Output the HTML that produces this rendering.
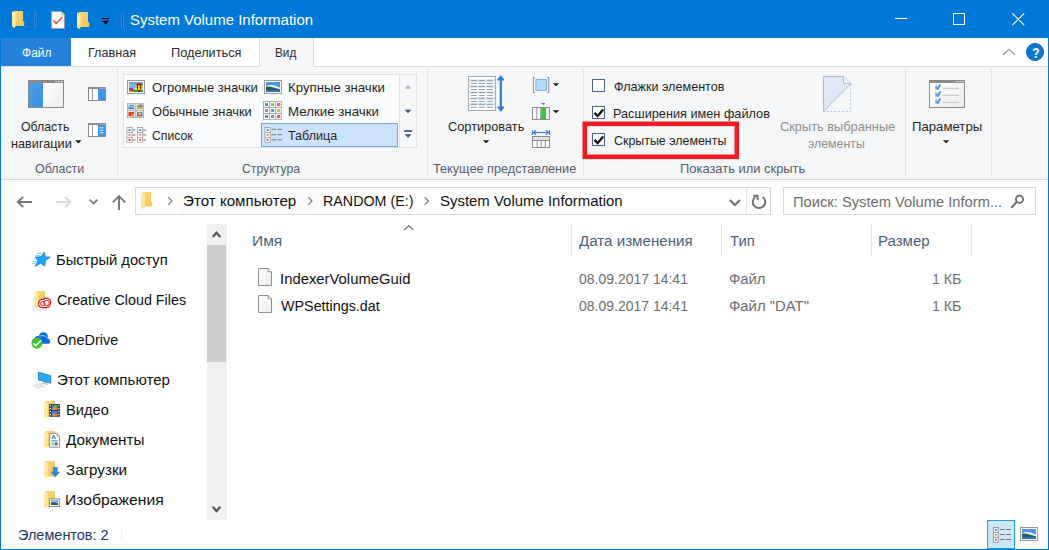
<!DOCTYPE html>
<html lang="ru">
<head>
<meta charset="utf-8">
<title>System Volume Information</title>
<style>
html,body{margin:0;padding:0;}
body{width:1049px;height:550px;overflow:hidden;background:#fff;font-family:"Liberation Sans",sans-serif;position:relative;}
#win{position:absolute;left:0;top:0;width:1049px;height:550px;background:#fff;overflow:hidden;}
.abs,.t,svg.i{position:absolute;}
.t{white-space:nowrap;line-height:1;transform-origin:0 0;font-family:"Liberation Sans",sans-serif;}
svg.i{overflow:visible;}
/* frame */
#titlebar{left:0;top:0;width:1049px;height:38px;background:#0078d7;}
#bl{left:0;top:38px;width:1px;height:512px;background:#0078d7;}
#br{left:1048px;top:38px;width:1px;height:512px;background:#0078d7;}
#bb{left:0;top:549px;width:1049px;height:1px;background:#0078d7;}
/* tabs */
#filetab{left:1px;top:38px;width:70px;height:28px;background:#2482da;}
#tabline{left:1px;top:66px;width:1047px;height:1px;background:#dadbdc;}
#vidtab{left:259px;top:38px;width:55px;height:29px;background:#f5f6f7;border-left:1px solid #d9dadb;border-right:1px solid #d9dadb;box-sizing:border-box;}
/* ribbon */
#ribbon{left:1px;top:67px;width:1047px;height:113px;background:#f5f6f7;}
#ribline{left:1px;top:179px;width:1047px;height:1px;background:#dadbdc;}
.vsep{width:1px;top:69px;height:107px;background:#e1e2e3;}
#gallery{left:123px;top:74px;width:294px;height:74px;box-sizing:border-box;border:1px solid #e1e2e3;background:#fbfcfd;}
#galscroll{left:399px;top:74px;width:18px;height:74px;box-sizing:border-box;border:1px solid #e1e2e3;background:#f5f6f7;}
#galsel{left:261px;top:123px;width:137px;height:24px;box-sizing:border-box;border:1px solid #6aa9e8;background:#cde3fb;}
.cb{width:13px;height:13px;box-sizing:border-box;border:1px solid #4d608b;background:#fff;}
#redbox{left:582.5px;top:121.5px;width:156.5px;height:37.5px;box-sizing:border-box;border:4.5px solid #ed1c24;}
/* address row */
#addr{left:135px;top:187px;width:636px;height:28px;box-sizing:border-box;border:1px solid #d9d9d9;background:#fff;}
#addrsep{left:746px;top:188px;width:1px;height:26px;background:#e5e5e5;}
#search{left:783px;top:187px;width:253px;height:28px;box-sizing:border-box;border:1px solid #d9d9d9;background:#fff;}
/* columns */
.csep{width:1px;top:224px;height:32px;background:#e5e5e5;}
/* nav scroll */
#sbtrack{left:207px;top:224px;width:20px;height:296px;background:#f0f0f0;}
#sbthumb{left:207px;top:245px;width:19px;height:117px;background:#cdcdcd;}
#navsep{left:229px;top:224px;width:1px;height:296px;background:#f6f6f6;}
/* status */
#stsep{left:121px;top:528px;width:1px;height:13px;background:#f0f0f0;}
#vbtn{left:987px;top:520px;width:28px;height:29px;box-sizing:border-box;border:1px solid #26a0da;background:#cce8f7;}
</style>
</head>
<body>
<div id="win">
<div class="abs" id="titlebar"></div>
<div class="abs" id="filetab"></div>
<div class="abs" id="ribbon"></div>
<div class="abs" id="tabline"></div>
<div class="abs" id="vidtab"></div>
<div class="abs" id="ribline"></div>
<div class="abs vsep" style="left:117px"></div>
<div class="abs vsep" style="left:427px"></div>
<div class="abs vsep" style="left:583px"></div>
<div class="abs vsep" style="left:905px"></div>
<div class="abs vsep" style="left:991px"></div>
<div class="abs" id="gallery"></div>
<div class="abs" id="galscroll"></div>
<div class="abs" id="galsel"></div>
<div class="abs cb" style="left:592px;top:79px"></div>
<div class="abs cb" style="left:592px;top:106px"></div>
<div class="abs cb" style="left:592px;top:133px"></div>
<svg class="i" style="left:575px;top:115px" width="175" height="50" viewBox="575 115 175 50"><rect x="584.8" y="123.8" width="152" height="33" fill="none" stroke="#ed1c24" stroke-width="4.6"/></svg>
<div class="abs" id="addr"></div>
<div class="abs" id="bchl" style="left:179px;top:189px;width:140px;height:25px;background:#fbfbfb"></div>
<div class="abs" id="addrsep"></div>
<div class="abs" id="search"></div>
<div class="abs csep" style="left:571px"></div>
<div class="abs csep" style="left:721px"></div>
<div class="abs csep" style="left:871px"></div>
<div class="abs csep" style="left:971px"></div>
<div class="abs" id="sbtrack"></div>
<div class="abs" id="sbthumb"></div>
<div class="abs" id="navsep"></div>
<div class="abs" id="stsep"></div>
<div class="abs" id="vbtn"></div>
<!-- ===== title bar icons ===== -->
<svg class="i" style="left:0;top:0" width="1049" height="68" viewBox="0 0 1049 68">
 <defs>
  <linearGradient id="fb" x1="0" y1="0" x2="1" y2="1"><stop offset="0" stop-color="#f7d77e"/><stop offset="1" stop-color="#eec556"/></linearGradient>
  <linearGradient id="ff" x1="0" y1="0" x2="0" y2="1"><stop offset="0" stop-color="#fff0b8"/><stop offset="1" stop-color="#ffe28c"/></linearGradient>
 </defs>
 <!-- folder 1 -->
 <path d="M13.5 11 H23 V21 H24.2 V26 H15 Z" fill="url(#fb)"/>
 <path d="M12 11.2 L15.6 13.4 V26.2 L14.6 28 L12 26.4 Z" fill="url(#ff)"/>
 <!-- separator -->
 <rect x="33.9" y="11.6" width="2.6" height="17.3" rx="1.3" fill="#3d8fdc"/><rect x="34.7" y="12.4" width="1" height="15.7" fill="#1a5aa6"/>
 <!-- doc with check -->
 <path d="M51.6 11.6 H61.5 L64.4 14.5 V28.4 H51.6 Z" fill="#fdfdfd" stroke="#a9a29c" stroke-width="0.9"/>
 <path d="M61.3 11.8 V14.7 H64.2" fill="#e9e9e9" stroke="#a9a29c" stroke-width="0.7"/>
 <path d="M53.4 20.6 L56.3 23.4 L62.4 17" fill="none" stroke="#f4511e" stroke-width="1.5"/>
 <!-- folder 2 -->
 <path d="M78.5 12 H88 V22 H89.2 V27 H80 Z" fill="url(#fb)"/>
 <path d="M77 12.2 L80.6 14.4 V27.2 L79.6 29 L77 27.4 Z" fill="url(#ff)"/>
 <!-- qat dropdown -->
 <rect x="101.8" y="18" width="7.6" height="1.1" fill="#000"/>
 <path d="M102.3 20.8 H109 L105.65 24.5 Z" fill="#000"/>
 <rect x="121.2" y="11.6" width="2.6" height="17.3" rx="1.3" fill="#3d8fdc"/><rect x="122" y="12.4" width="1" height="15.7" fill="#1a5aa6"/>
 <!-- window controls -->
 <rect x="895" y="18" width="12" height="1" fill="#fff"/>
 <rect x="953.5" y="13.5" width="11" height="11" fill="none" stroke="#fff" stroke-width="1"/>
 <path d="M1012.3 13.3 L1024.2 25.2 M1024.2 13.3 L1012.3 25.2" stroke="#fff" stroke-width="1.1" fill="none"/>
 <!-- ribbon collapse chevron -->
 <path d="M1003 55 L1009 49.2 L1015 55" fill="none" stroke="#8c8c8c" stroke-width="1.1"/>
 <!-- help -->
 <circle cx="1035" cy="52" r="8.5" fill="#0c78d6" stroke="#0a5cab" stroke-width="1"/>
 <text transform="translate(1035.8 57.7) scale(0.8 1)" text-anchor="middle" font-family="Liberation Sans" font-weight="bold" font-size="14.8" fill="#fff">?</text>
</svg>
<!-- ===== address row arrows ===== -->
<svg class="i" style="left:0;top:185px" width="1049" height="35" viewBox="0 185 1049 35">
 <!-- back -->
 <path d="M32 202 H18 M23.2 196.9 L17.8 202 L23.2 207.1" fill="none" stroke="#747474" stroke-width="1.9"/>
 <!-- forward (disabled) -->
 <path d="M56 202 H70.2 M65 196.9 L70.4 202 L65 207.1" fill="none" stroke="#d9d9d9" stroke-width="1.9"/>
 <!-- recent chevron -->
 <path d="M89.6 199.6 L93.5 203.5 L97.4 199.6" fill="none" stroke="#747474" stroke-width="1.6"/>
 <!-- up -->
 <path d="M119 210 V196 M112.8 202.4 L119 196.2 L125.2 202.4" fill="none" stroke="#747474" stroke-width="1.9"/>
 <!-- folder in address -->
 <path d="M142.5 192 H151 V201.5 H152.2 V206.5 H144 Z" fill="url(#fb)"/>
 <path d="M141 192.2 L144.6 194.4 V207.2 L143.6 209 L141 207.4 Z" fill="url(#ff)"/>
 <!-- breadcrumb chevrons -->
 <path d="M168.2 197.2 L172 201 L168.2 204.8" fill="none" stroke="#777" stroke-width="1.2"/>
 <path d="M308.2 197.2 L312 201 L308.2 204.8" fill="none" stroke="#777" stroke-width="1.2"/>
 <path d="M424.7 197.2 L428.5 201 L424.7 204.8" fill="none" stroke="#777" stroke-width="1.2"/>
 <!-- address dropdown -->
 <path d="M729.9 200 L734.9 205 L739.9 200" fill="none" stroke="#707070" stroke-width="2"/>
 <!-- refresh -->
 <path d="M762.82 197.01 A6.2 6.2 0 1 1 755.18 197.01" fill="none" stroke="#707070" stroke-width="2"/>
 <path d="M753.2 195.8 H757.6 V200" fill="none" stroke="#707070" stroke-width="2"/>
 <!-- magnifier -->
 <circle cx="1019.5" cy="199.3" r="3.6" fill="none" stroke="#6e6e6e" stroke-width="1.8"/>
 <path d="M1016.7 202 L1011.2 207.8" stroke="#6e6e6e" stroke-width="2" fill="none"/>
</svg>
<!-- ===== ribbon: panes group + layout gallery ===== -->
<svg class="i" style="left:0;top:68px" width="430" height="110" viewBox="0 68 430 110">
 <defs>
  <linearGradient id="bluep" x1="0" y1="0" x2="1" y2="1"><stop offset="0" stop-color="#4a9de8"/><stop offset="1" stop-color="#3a8fdd"/></linearGradient>
  <linearGradient id="whitep" x1="0" y1="0" x2="1" y2="1"><stop offset="0" stop-color="#ffffff"/><stop offset="1" stop-color="#ececec"/></linearGradient>
 </defs>
 <!-- big nav pane icon 28..64 x 80..108 -->
 <rect x="28" y="80" width="36" height="28" fill="#8a8a8a"/>
 <rect x="29" y="83" width="14" height="24" fill="url(#bluep)"/>
 <rect x="43" y="83" width="20" height="24" fill="url(#whitep)"/>
 <rect x="55" y="81" width="2" height="1" fill="#dcdcdc"/><rect x="58" y="81" width="2" height="1" fill="#dcdcdc"/><rect x="61" y="81" width="2" height="1" fill="#dcdcdc"/>
 <!-- small preview pane icon 88..106 x 87..101 -->
 <rect x="88" y="87" width="18" height="14" fill="#8a8a8a"/>
 <rect x="89" y="89" width="16" height="11" fill="#fff"/>
 <rect x="92" y="89" width="1" height="11" fill="#9b9b9b"/>
 <rect x="98" y="89" width="7" height="11" fill="#3f95e3"/>
 <rect x="100" y="87.8" width="1.2" height="0.8" fill="#dcdcdc"/><rect x="102" y="87.8" width="1.2" height="0.8" fill="#dcdcdc"/><rect x="104" y="87.8" width="1.2" height="0.8" fill="#dcdcdc"/>
 <!-- small details pane icon 88..106 x 123..137 -->
 <rect x="88" y="123" width="18" height="14" fill="#8a8a8a"/>
 <rect x="89" y="125" width="16" height="11" fill="#fff"/>
 <rect x="92" y="125" width="1" height="11" fill="#9b9b9b"/>
 <rect x="98" y="125" width="7" height="11" fill="#3f95e3"/>
 <rect x="99.5" y="127.3" width="4" height="1" fill="#e8f2fc"/><rect x="99.5" y="129.8" width="4" height="1" fill="#e8f2fc"/><rect x="99.5" y="132.3" width="4" height="1" fill="#e8f2fc"/>
 <rect x="100" y="123.8" width="1.2" height="0.8" fill="#dcdcdc"/><rect x="102" y="123.8" width="1.2" height="0.8" fill="#dcdcdc"/><rect x="104" y="123.8" width="1.2" height="0.8" fill="#dcdcdc"/>
 <!-- nav pane dropdown arrow -->
 <path d="M75.2 140.2 H81.6 L78.4 143.4 Z" fill="#1a1a1a"/>

 <!-- gallery: extra large icons 127..145 x 80..94 -->
 <rect x="127" y="80" width="18" height="14" fill="#999"/>
 <rect x="128" y="81" width="16" height="12" fill="#fff"/>
 <defs><linearGradient id="sky" x1="0" y1="0" x2="0" y2="1"><stop offset="0" stop-color="#5a9ff0"/><stop offset="1" stop-color="#a4cff8"/></linearGradient></defs>
 <rect x="129" y="82" width="14" height="10" fill="url(#sky)"/>
 <path d="M129 84.6 C130 83.8 131.2 84.2 131.8 85.4" fill="none" stroke="#f2d23a" stroke-width="0.9"/>
 <path d="M129 88.2 L130 87.4 L131 89 L132.2 87.6 L133.6 89.4 L134 92 H129 Z" fill="#7a2fb0"/>
 <path d="M129 89.6 L130.2 89 L131.2 90.4 L132.4 89.4 L133.8 90.6 L134 92 H129 Z" fill="#e8322a"/>
 <path d="M129 91 L130.6 90.6 L131.6 91.4 L133 91 L133.6 92 H129 Z" fill="#f59a1e"/>
 <rect x="133.9" y="90" width="9.1" height="2" fill="#18a32e"/>
 <circle cx="139.1" cy="86.9" r="3.9" fill="#f4e020"/>
 <path d="M135.6 85.2 A3.9 3.9 0 0 1 142.6 85.2 Z" fill="#c23a1a"/>
 <rect x="135.3" y="86.6" width="7.6" height="0.9" fill="#e8861e"/>
 <rect x="137.1" y="83.8" width="0.9" height="6" fill="#2a1408"/><rect x="140.2" y="83.8" width="0.9" height="6" fill="#2a1408"/>
 <path d="M137.4 90.2 H140.8 L140 91.6 H138.2 Z" fill="#120a06"/>
 <!-- gallery: medium icons 127..144 x 103..118 -->
 <g>
  <rect x="127" y="103" width="8.5" height="7.5" fill="#a6a6a6"/><rect x="127.8" y="103.8" width="6.9" height="5.9" fill="#fff"/>
  <rect x="128.5" y="104.6" width="5.5" height="4.2" fill="#5b9fe0"/><rect x="128.5" y="106.6" width="5.5" height="1" fill="#dfeaf5"/><rect x="128.5" y="107.6" width="5.5" height="1.2" fill="#2f6f5a"/>
  <rect x="135.5" y="103" width="8.5" height="7.5" fill="#a6a6a6"/><rect x="136.3" y="103.8" width="6.9" height="5.9" fill="#fff"/>
  <rect x="137" y="104.6" width="5.5" height="4.2" fill="#8fb84a"/><rect x="139.4" y="104.6" width="3.1" height="2.2" fill="#9a62c0"/><rect x="137" y="107.4" width="5.5" height="1.4" fill="#d9b13a"/>
  <rect x="127" y="110.5" width="8.5" height="7.5" fill="#a6a6a6"/><rect x="127.8" y="111.3" width="6.9" height="5.9" fill="#fff"/>
  <rect x="128.5" y="112.1" width="5.5" height="4.2" fill="#d8322a"/><rect x="131" y="113.6" width="3" height="2.7" fill="#f0932a"/>
  <rect x="135.5" y="110.5" width="8.5" height="7.5" fill="#a6a6a6"/><rect x="136.3" y="111.3" width="6.9" height="5.9" fill="#fff"/>
  <rect x="137" y="112.1" width="5.5" height="4.2" fill="#3f7fd8"/><rect x="138.6" y="112.8" width="2.6" height="2.6" fill="#f2c21a"/><rect x="137" y="115.3" width="5.5" height="1" fill="#d8322a"/>
 </g>
 <!-- gallery: list 126..146 x 127..143 -->
 <g id="listcol">
  <rect x="126.5" y="127" width="6" height="15.6" fill="#9a9a9a"/>
  <rect x="127.3" y="127.8" width="4.4" height="4.2" fill="#fff"/><rect x="127.3" y="132.8" width="4.4" height="4.2" fill="#fff"/><rect x="127.3" y="137.8" width="4.4" height="4.2" fill="#fff"/>
  <rect x="128.6" y="129.2" width="1.9" height="1.7" fill="#2f78c8"/>
  <rect x="128.6" y="134.1" width="1.9" height="1.7" fill="#c8922a"/>
  <rect x="128.6" y="139" width="1.9" height="1.7" fill="#d8322a"/>
  <rect x="132.5" y="129.5" width="3" height="1" fill="#777"/><rect x="132.5" y="134.5" width="3" height="1" fill="#777"/><rect x="132.5" y="139.5" width="3" height="1" fill="#777"/>
 </g>
 <use href="#listcol" x="10.6" y="0"/>

 <!-- gallery: large icons 264..282 x 80..94 -->
 <rect x="264" y="80" width="18" height="14" fill="#999"/>
 <rect x="265" y="81" width="16" height="12" fill="#fff"/>
 <rect x="266" y="82" width="14" height="10" fill="#4f97de"/>
 <path d="M266 86.2 C269 84.2 273 84.6 280 87.4 V89 H266 Z" fill="#e6f0f8"/>
 <path d="M266 86.8 C270 86 274 88 280 89.4 V90.4 H266 Z" fill="#2e5f4c"/>
 <rect x="266" y="90.2" width="14" height="1.8" fill="#2f6fc8"/>
 <!-- gallery: small icons 263..282 x 101..120 -->
 <g>
  <rect x="263" y="101" width="19" height="18.8" fill="#a6a6a6"/>
  <g fill="#fff">
   <rect x="263.9" y="101.9" width="5.2" height="5" /><rect x="270" y="101.9" width="5.2" height="5"/><rect x="276.1" y="101.9" width="5.2" height="5"/>
   <rect x="263.9" y="107.9" width="5.2" height="5" /><rect x="270" y="107.9" width="5.2" height="5"/><rect x="276.1" y="107.9" width="5.2" height="5"/>
   <rect x="263.9" y="113.9" width="5.2" height="5" /><rect x="270" y="113.9" width="5.2" height="5"/><rect x="276.1" y="113.9" width="5.2" height="5"/>
  </g>
  <rect x="265" y="103.2" width="3" height="2.6" fill="#3f86d0"/><rect x="271.1" y="103.2" width="3" height="2.6" fill="#8fb84a"/><rect x="277.2" y="103.2" width="3" height="2.6" fill="#d02a1e"/>
  <rect x="265" y="109.2" width="3" height="2.6" fill="#4a86c8"/><rect x="271.1" y="109.2" width="3" height="2.6" fill="#3f86d0"/><rect x="277.2" y="109.2" width="3" height="2.6" fill="#a8b84a"/>
  <rect x="265" y="115.2" width="3" height="2.6" fill="#3f86d0"/><rect x="271.1" y="115.2" width="3" height="2.6" fill="#4a78c8"/><rect x="277.2" y="115.2" width="3" height="2.6" fill="#d02a1e"/>
  <rect x="266.2" y="110" width="1.6" height="1.4" fill="#e0a02a"/><rect x="272.6" y="116" width="1.6" height="1.4" fill="#e0a02a"/><rect x="278.6" y="104" width="1.4" height="1.4" fill="#f0a02a"/><rect x="278.6" y="116" width="1.4" height="1.4" fill="#f0a02a"/>
 </g>
 <!-- gallery: details 264.5..282 x 127..142.5 -->
 <g>
  <rect x="264.5" y="127.2" width="6" height="15.4" fill="#9a9a9a"/>
  <rect x="265.3" y="128" width="4.4" height="4.1" fill="#fff"/><rect x="265.3" y="132.9" width="4.4" height="4.1" fill="#fff"/><rect x="265.3" y="137.8" width="4.4" height="4.1" fill="#fff"/>
  <rect x="266.6" y="129.3" width="1.9" height="1.7" fill="#2f78c8"/>
  <rect x="266.6" y="134.2" width="1.9" height="1.7" fill="#c8922a"/>
  <rect x="266.6" y="139" width="1.9" height="1.7" fill="#d8322a"/>
  <g fill="#777">
   <rect x="271.6" y="128.8" width="4.6" height="1"/><rect x="277.4" y="128.8" width="4.8" height="1"/>
   <rect x="271.6" y="134.2" width="4.6" height="1"/><rect x="277.4" y="134.2" width="4.8" height="1"/>
   <rect x="271.6" y="139.3" width="4.6" height="1"/><rect x="277.4" y="139.3" width="4.8" height="1"/>
  </g>
 </g>
 <!-- gallery scroll arrows -->
 <path d="M404.8 88.8 H411.2 L408 84.9 Z" fill="#adb5c1"/>
 <path d="M404.8 109.8 H411.2 L408 113.3 Z" fill="#3f526f"/>
 <rect x="404.1" y="130.2" width="8" height="1.7" fill="#3f526f"/>
 <path d="M404.7 134.3 H411.5 L408.1 138.1 Z" fill="#3f526f"/>
</svg>
<!-- ===== ribbon: current view, show/hide, options ===== -->
<svg class="i" style="left:430px;top:68px" width="618" height="110" viewBox="430 68 618 110">
 <!-- sort-by table 468..496 x 76..111 -->
 <rect x="468.5" y="76.5" width="27" height="34" fill="#fff" stroke="#a8a8a8" stroke-width="1"/>
 <g fill="#d6e9f7">
  <rect x="469" y="79.2" width="26" height="2.9"/><rect x="469" y="85.1" width="26" height="2.9"/><rect x="469" y="91" width="26" height="2.9"/><rect x="469" y="97" width="26" height="2.9"/><rect x="469" y="102.9" width="26" height="2.9"/>
 </g>
 <g fill="#9a9a9a">
  <g id="srow"><rect x="470.8" y="80.1" width="5.9" height="1"/><rect x="478.8" y="80.1" width="5.9" height="1"/><rect x="486.9" y="80.1" width="5.9" height="1"/></g>
  <use href="#srow" y="2.97"/><use href="#srow" y="5.94"/><use href="#srow" y="8.91"/><use href="#srow" y="11.88"/><use href="#srow" y="14.85"/><use href="#srow" y="17.82"/><use href="#srow" y="20.79"/><use href="#srow" y="23.76"/><use href="#srow" y="26.73"/>
 </g>
 <!-- sort arrow -->
 <path d="M500.8 77.5 V109.5" stroke="#2b7cd3" stroke-width="2.2" fill="none"/>
 <path d="M497.9 80.4 L500.8 76.8 L503.7 80.4 M497.9 106.6 L500.8 110.2 L503.7 106.6" stroke="#2b7cd3" stroke-width="2" fill="none"/>
 <!-- sort dropdown -->
 <path d="M482.9 140.2 H489.4 L486.15 143.2 Z" fill="#1a1a1a"/>
 <!-- group by icon 533..549 x 77..93 -->
 <path d="M535 77.5 H533.4 V92.5 H535 M547.2 77.5 H548.8 V92.5 H547.2" fill="none" stroke="#8c8c8c" stroke-width="1"/>
 <rect x="535.9" y="79.5" width="10.6" height="10.8" fill="#b8dbfb" stroke="#72b4f0" stroke-width="1"/>
 <path d="M552.8 83.2 H559.2 L556 86.2 Z" fill="#1a1a1a"/>
 <!-- add columns icon 532..550 x 107..120 -->
 <rect x="532.5" y="107.5" width="17" height="12" fill="#fff" stroke="#8c8c8c" stroke-width="1"/>
 <rect x="536.4" y="108" width="1" height="11" fill="#8c8c8c"/><rect x="540.2" y="108" width="1" height="11" fill="#8c8c8c"/><rect x="545" y="108" width="1" height="11" fill="#8c8c8c"/>
 <rect x="541.2" y="108" width="3.8" height="11" fill="#2fcb2f"/>
 <path d="M541.2 102.9 H545.4 L543.3 105 Z" fill="#2b7cd3"/>
 <path d="M552.8 110.3 H559.2 L556 113.3 Z" fill="#1a1a1a"/>
 <!-- size all columns icon 532..550 x 130..148 -->
 <path d="M532.5 130.2 V135 M549.5 130.2 V135 M533.5 132.5 H548.5 M536 130.2 L533.7 132.5 L536 134.8 M546 130.2 L548.3 132.5 L546 134.8" fill="none" stroke="#2b7cd3" stroke-width="1.2"/>
 <rect x="532.5" y="136.5" width="17" height="11" fill="#fff" stroke="#8c8c8c" stroke-width="1"/>
 <rect x="533" y="137" width="16" height="3" fill="#e2e2e2"/>
 <rect x="533" y="140" width="16" height="1" fill="#8c8c8c"/>
 <rect x="536.6" y="140.5" width="1" height="6.5" fill="#8c8c8c"/><rect x="540.7" y="140.5" width="1" height="6.5" fill="#8c8c8c"/><rect x="544.8" y="140.5" width="1" height="6.5" fill="#8c8c8c"/>
 <!-- check marks in checkboxes 2 and 3 -->
 <path d="M594.4 112.8 L597.7 116 L603.2 109.6" fill="none" stroke="#111" stroke-width="2.3"/>
 <path d="M594.4 139.8 L597.7 143 L603.2 136.6" fill="none" stroke="#111" stroke-width="2.3"/>
 <!-- hide selected items icon 823..851 x 76..112 -->
 <path d="M823.5 76.5 H843.5 L850.8 83.6 L823.5 111.3 Z" fill="#e1e9f9" stroke="#aab9dd" stroke-width="1"/>
 <path d="M843.5 76.5 V83.6 H850.8" fill="#edf2fb" stroke="#aab9dd" stroke-width="1"/>
 <path d="M850.7 84 V111.5 H823.5" fill="none" stroke="#b3c0df" stroke-width="1" stroke-dasharray="2.2 1.6"/>
 <!-- options icon 929..965 x 80..108 -->
 <rect x="929" y="80" width="36" height="28" fill="#8a8a8a"/>
 <rect x="930" y="83" width="34" height="24" fill="url(#whitep)"/>
 <rect x="956" y="81" width="2" height="1" fill="#dcdcdc"/><rect x="959" y="81" width="2" height="1" fill="#dcdcdc"/><rect x="962" y="81" width="2" height="1" fill="#dcdcdc"/>
 <g id="orow">
  <rect x="935.6" y="85.8" width="4" height="3.8" fill="#f4f4f4" stroke="#c4c4c4" stroke-width="0.8"/>
  <path d="M935.8 86.8 L937.6 88.8 L940.6 84.4" fill="none" stroke="#2b8ee8" stroke-width="1.5"/>
  <rect x="942.8" y="87.8" width="16.2" height="1" fill="#c4c4c4"/>
 </g>
 <use href="#orow" y="7"/><use href="#orow" y="14"/>
 <path d="M942.8 140.2 H949.3 L946.05 143.2 Z" fill="#1a1a1a"/>
</svg>
<!-- ===== main area icons ===== -->
<svg class="i" style="left:0;top:222px" width="1049" height="328" viewBox="0 222 1049 328">
 <defs>
  <g id="fold16"><!-- small folder, origin top-left at (0,0), 11 x 17 -->
   <path d="M1.4 0 H10.9 V15.6 H2.6 Z" fill="url(#fb)"/>
   <path d="M0 0.3 L3.6 2.6 V15.3 L2.7 17 L0 15.4 Z" fill="url(#ff)"/>
  </g>
  <linearGradient id="pg" x1="0" y1="0" x2="1" y2="1"><stop offset="0" stop-color="#ffffff"/><stop offset="1" stop-color="#ececec"/></linearGradient>
  <g id="fileico"><!-- 14 x 18 page at (0,0) -->
   <path d="M0.5 0.5 H10.2 L13.5 3.8 V17.5 H0.5 Z" fill="url(#pg)" stroke="#8e8e8e" stroke-width="1"/>
   <path d="M10.2 0.5 V3.8 H13.5" fill="#fff" stroke="#8e8e8e" stroke-width="1"/>
  </g>
 </defs>
 <!-- quick access star -->
 <g stroke="#86c8f8" stroke-width="1" fill="none" stroke-linecap="round">
  <path d="M37 253.4 H41.8"/><path d="M36 255.6 H40"/><path d="M33 261.4 H36.2"/><path d="M32.2 263.4 H34.8"/>
 </g>
 <path d="M44.4 252 L45.2 257 L50.2 257.2 L45.6 260.4 L44.7 266 L40.6 263.2 L35.2 266.3 L38 260.6 L35 257.2 L41.1 256.8 Z" fill="#22a0f4" stroke="#1687de" stroke-width="0.9" stroke-linejoin="round"/>
 <!-- creative cloud folder -->
 <use href="#fold16" x="34.2" y="291"/>
 <path d="M38.6 303.4 C38.6 300.6 40.8 298.9 43.2 299.3 C44.2 298.2 45.6 297.9 47 298.2 C49.4 298.7 50.8 300.8 50.5 303.2 C50.3 305.9 48.4 307.6 45.8 307.6 H42.6 C40.2 307.6 38.6 305.7 38.6 303.4 Z" fill="#fff" stroke="#e8141c" stroke-width="1.2"/>
 <circle cx="42.7" cy="303.6" r="2.1" fill="#fff7d0" stroke="#e8141c" stroke-width="1"/>
 <circle cx="46.6" cy="303" r="2.7" fill="none" stroke="#e8141c" stroke-width="1"/>
 <!-- onedrive -->
 <path d="M34.2 340.6 C33.8 337.6 36.2 335.4 38.8 336 C39.6 333.2 42.4 331.6 45 332.5 C46.6 333.1 47.6 334.6 47.8 336.2 L47 341 H35 Z" fill="#0a6fdc"/>
 <path d="M38.4 338.2 C40 335.4 44.2 334.6 46.4 337.2" fill="none" stroke="#fff" stroke-width="0.8"/>
 <path d="M36 343.8 C33.2 343.8 32 341 33.6 339.2 C34.6 338.2 36.2 338.2 37.2 338.8 C38.4 335.6 43.6 335.2 45.4 338.6 C47.8 337.8 50 339.2 50.2 341.4 C50.3 342.8 49.3 343.8 48 343.8 Z" fill="#0a6fdc"/>
 <circle cx="37" cy="343.1" r="5.6" fill="#3fc42f"/>
 <path d="M33.4 343.4 L35.7 345.6 L41 340.5" fill="none" stroke="#fff" stroke-width="1.5"/>
 <!-- this pc -->
 <path d="M31.8 385.2 L41 382.8 L45.8 386.6 L37 389 Z" fill="#e2e4e6"/>
 <path d="M41.6 382.4 L47.8 383.8 L47.8 385 L41.6 383.6 Z" fill="#b8bcc0"/>
 <rect x="43.6" y="380.6" width="3" height="2.6" fill="#c4c8cc"/>
 <path d="M38.4 372.1 L50.8 375.7 V383.3 L38.4 379.9 Z" fill="#2aa7f6" stroke="#2a80c4" stroke-width="0.9" stroke-linejoin="round"/>
 <!-- videos -->
 <use href="#fold16" x="44.1" y="401"/>
 <rect x="49.2" y="404" width="10.8" height="12.8" fill="#3b3b3b"/>
 <g fill="#fff"><rect x="49.9" y="405" width="1.1" height="1.3"/><rect x="49.9" y="408" width="1.1" height="1.3"/><rect x="49.9" y="411" width="1.1" height="1.3"/><rect x="49.9" y="414" width="1.1" height="1.3"/>
 <rect x="58.2" y="405" width="1.1" height="1.3"/><rect x="58.2" y="408" width="1.1" height="1.3"/><rect x="58.2" y="411" width="1.1" height="1.3"/><rect x="58.2" y="414" width="1.1" height="1.3"/></g>
 <rect x="51.8" y="404.8" width="5.6" height="5.2" fill="#3f86d8"/><path d="M51.8 410 L54 406.6 L56 408.6 L57.4 407 V410 Z" fill="#e08a2a"/><rect x="54.6" y="405.2" width="2.4" height="2" fill="#7ab83a"/>
 <rect x="51.8" y="411" width="5.6" height="5.2" fill="#3f86d8"/><path d="M51.8 416.2 L54 412.8 L56 414.8 L57.4 413.2 V416.2 Z" fill="#e08a2a"/>
 <!-- documents -->
 <use href="#fold16" x="44.1" y="431"/>
 <path d="M49.6 433.4 H57 L59.6 436 V447.2 H49.6 Z" fill="#fff" stroke="#8e8e8e" stroke-width="1"/>
 <path d="M57 433.4 V436 H59.6" fill="#f2f2f2" stroke="#8e8e8e" stroke-width="0.8"/>
 <path d="M52 439 L53.8 435 L55.6 439 M52.6 437.8 H55" fill="none" stroke="#2f78d0" stroke-width="0.9"/>
 <rect x="51.4" y="440.4" width="6.4" height="1" fill="#2f78d0"/>
 <rect x="51.4" y="442.6" width="2.4" height="0.9" fill="#7a8a9a"/><rect x="51.4" y="444.4" width="2.4" height="0.9" fill="#7a8a9a"/>
 <rect x="54.6" y="442.4" width="3.2" height="3" fill="#3f8a5a"/>
 <!-- downloads -->
 <use href="#fold16" x="44.1" y="461"/>
 <path d="M52.9 467 H57.6 V471.8 H60.2 L55.25 477.2 L50.3 471.8 H52.9 Z" fill="#2e86de"/>
 <!-- pictures -->
 <use href="#fold16" x="44.1" y="491"/>
 <rect x="49.6" y="498.9" width="10" height="7.6" fill="#fff" stroke="#8a8a8a" stroke-width="1"/>
 <rect x="51" y="500.3" width="7.2" height="4.8" fill="#4f97de"/>
 <path d="M51 502.6 C53 501.6 55.5 502.2 58.2 503.6 V505.1 H51 Z" fill="#2e5f4c"/>
 <path d="M51 502.2 C53 501.2 55.5 501.6 58.2 503" fill="none" stroke="#e6f0f8" stroke-width="0.7"/>
 <!-- file icons -->
 <use href="#fileico" x="258" y="268"/>
 <use href="#fileico" x="258" y="295"/>
 <!-- nav scrollbar arrows -->
 <path d="M212.7 237 L216.5 232.7 L220.3 237" fill="none" stroke="#555" stroke-width="2.3"/>
 <path d="M212.7 506.8 L216.5 511.1 L220.3 506.8" fill="none" stroke="#555" stroke-width="2.3"/>
 <!-- column sort arrow -->
 <path d="M404.2 230.2 L408.8 225.6 L413.4 230.2" fill="none" stroke="#666" stroke-width="1.15"/>
 <!-- status bar: details view button icon -->
 <g>
  <rect x="993" y="527" width="5.6" height="15.6" fill="#8e8e8e"/>
  <rect x="993.9" y="527.9" width="3.8" height="4"  fill="#fff"/><rect x="993.9" y="532.8" width="3.8" height="4" fill="#fff"/><rect x="993.9" y="537.7" width="3.8" height="4" fill="#fff"/>
  <rect x="995" y="529.2" width="1.7" height="1.6" fill="#2f6fb8"/><rect x="995" y="534" width="1.7" height="1.6" fill="#c8922a"/><rect x="995" y="538.9" width="1.7" height="1.6" fill="#d8322a"/>
  <g fill="#777"><rect x="1000" y="529" width="4.6" height="1"/><rect x="1006" y="529" width="5" height="1"/>
  <rect x="1000" y="534" width="4.6" height="1"/><rect x="1006" y="534" width="5" height="1"/>
  <rect x="1000" y="539" width="4.6" height="1"/><rect x="1006" y="539" width="5" height="1"/></g>
 </g>
 <!-- status bar: large icons view -->
 <rect x="1020" y="527" width="18" height="14" fill="#999"/>
 <rect x="1021" y="528" width="16" height="12" fill="#fff"/>
 <rect x="1022" y="529" width="14" height="10" fill="#4f97de"/>
 <path d="M1022 533.2 C1025 531.2 1029 531.6 1036 534.4 V536 H1022 Z" fill="#e6f0f8"/>
 <path d="M1022 533.8 C1026 533 1030 535 1036 536.4 V537.4 H1022 Z" fill="#2e5f4c"/>
 <rect x="1022" y="537.2" width="14" height="1.8" fill="#2f6fc8"/>
</svg>

<span class="t" style="left:129.60px;top:11.73px;font-size:15.2px;transform:scaleX(0.9856);color:#ffffff">System Volume Information</span>
<span class="t" style="left:22.00px;top:46.00px;font-size:13px;transform:scaleX(0.9243);color:#ffffff">Файл</span>
<span class="t" style="left:87.53px;top:46.00px;font-size:13px;transform:scaleX(0.9703);color:#2a2a2a">Главная</span>
<span class="t" style="left:170.52px;top:46.00px;font-size:13px;transform:scaleX(0.9824);color:#2a2a2a">Поделиться</span>
<span class="t" style="left:275.49px;top:46.00px;font-size:13px;transform:scaleX(0.9070);color:#2a2a2a">Вид</span>
<span class="t" style="left:20.50px;top:120.00px;font-size:13px;transform:scaleX(0.9465);color:#1f1f1f">Область</span>
<span class="t" style="left:10.50px;top:137.00px;font-size:13px;transform:scaleX(0.9763);color:#1f1f1f">навигации</span>
<span class="t" style="left:34.50px;top:162.00px;font-size:13px;transform:scaleX(0.9562);color:#555b6b">Области</span>
<span class="t" style="left:152.00px;top:81.00px;font-size:13px;transform:scaleX(1.0032);color:#1f1f1f">Огромные значки</span>
<span class="t" style="left:152.00px;top:105.00px;font-size:13px;transform:scaleX(0.9892);color:#1f1f1f">Обычные значки</span>
<span class="t" style="left:152.00px;top:129.00px;font-size:13px;transform:scaleX(0.9411);color:#1f1f1f">Список</span>
<span class="t" style="left:288.18px;top:81.00px;font-size:13px;transform:scaleX(1.0159);color:#1f1f1f">Крупные значки</span>
<span class="t" style="left:288.18px;top:105.00px;font-size:13px;transform:scaleX(1.0217);color:#1f1f1f">Мелкие значки</span>
<span class="t" style="left:288.00px;top:129.00px;font-size:13px;transform:scaleX(0.9663);color:#1f1f1f">Таблица</span>
<span class="t" style="left:242.00px;top:162.00px;font-size:13px;transform:scaleX(0.9416);color:#555b6b">Структура</span>
<span class="t" style="left:447.50px;top:120.00px;font-size:13px;transform:scaleX(0.9821);color:#1f1f1f">Сортировать</span>
<span class="t" style="left:432.50px;top:162.00px;font-size:13px;transform:scaleX(0.9755);color:#555b6b">Текущее представление</span>
<span class="t" style="left:614.00px;top:80.00px;font-size:13px;transform:scaleX(0.9687);color:#1f1f1f">Флажки элементов</span>
<span class="t" style="left:613.02px;top:107.00px;font-size:13px;transform:scaleX(0.9776);color:#1f1f1f">Расширения имен файлов</span>
<span class="t" style="left:614.00px;top:134.00px;font-size:13px;transform:scaleX(0.9552);color:#1f1f1f">Скрытые элементы</span>
<span class="t" style="left:679.51px;top:162.00px;font-size:13px;transform:scaleX(0.9935);color:#555b6b">Показать или скрыть</span>
<span class="t" style="left:779.50px;top:120.00px;font-size:13px;transform:scaleX(0.9842);color:#8e8e8e">Скрыть выбранные</span>
<span class="t" style="left:808.00px;top:137.00px;font-size:13px;transform:scaleX(0.9502);color:#8e8e8e">элементы</span>
<span class="t" style="left:911.99px;top:120.00px;font-size:13px;transform:scaleX(1.0125);color:#1f1f1f">Параметры</span>
<span class="t" style="left:182.60px;top:193.13px;font-size:15.2px;transform:scaleX(0.9972);color:#111111">Этот компьютер</span>
<span class="t" style="left:322.56px;top:193.13px;font-size:15.2px;transform:scaleX(0.9409);color:#111111">RANDOM (E:)</span>
<span class="t" style="left:439.60px;top:193.13px;font-size:15.2px;transform:scaleX(0.9835);color:#111111">System Volume Information</span>
<span class="t" style="left:793.03px;top:194.13px;font-size:15.2px;transform:scaleX(0.9685);color:#6d6d6d">Поиск: System Volume Inform...</span>
<span class="t" style="left:252.48px;top:233.13px;font-size:15.2px;transform:scaleX(1.0227);color:#4c607a">Имя</span>
<span class="t" style="left:579.00px;top:233.13px;font-size:15.2px;transform:scaleX(0.9966);color:#4c607a">Дата изменения</span>
<span class="t" style="left:730.00px;top:233.13px;font-size:15.2px;transform:scaleX(0.9764);color:#4c607a">Тип</span>
<span class="t" style="left:878.21px;top:233.13px;font-size:15.2px;transform:scaleX(0.9891);color:#4c607a">Размер</span>
<span class="t" style="left:279.52px;top:271.13px;font-size:15.2px;transform:scaleX(0.9777);color:#111111">IndexerVolumeGuid</span>
<span class="t" style="left:280.50px;top:298.13px;font-size:15.2px;transform:scaleX(0.9435);color:#111111">WPSettings.dat</span>
<span class="t" style="left:579.00px;top:271.13px;font-size:15.2px;transform:scaleX(0.9211);color:#6d6d6d">08.09.2017 14:41</span>
<span class="t" style="left:579.00px;top:298.13px;font-size:15.2px;transform:scaleX(0.9211);color:#6d6d6d">08.09.2017 14:41</span>
<span class="t" style="left:728.80px;top:271.13px;font-size:15.2px;transform:scaleX(0.9760);color:#6d6d6d">Файл</span>
<span class="t" style="left:728.80px;top:298.13px;font-size:15.2px;transform:scaleX(0.9803);color:#6d6d6d">Файл &quot;DAT&quot;</span>
<span class="t" style="left:932.07px;top:271.13px;font-size:15.2px;transform:scaleX(0.9340);color:#6d6d6d">1 КБ</span>
<span class="t" style="left:932.07px;top:298.13px;font-size:15.2px;transform:scaleX(0.9340);color:#6d6d6d">1 КБ</span>
<span class="t" style="left:56.03px;top:252.13px;font-size:15.2px;transform:scaleX(0.9683);color:#111111">Быстрый доступ</span>
<span class="t" style="left:56.50px;top:292.13px;font-size:15.2px;transform:scaleX(0.9443);color:#111111">Creative Cloud Files</span>
<span class="t" style="left:56.50px;top:332.13px;font-size:15.2px;transform:scaleX(0.9576);color:#111111">OneDrive</span>
<span class="t" style="left:56.50px;top:372.13px;font-size:15.2px;transform:scaleX(0.9945);color:#111111">Этот компьютер</span>
<span class="t" style="left:66.03px;top:402.13px;font-size:15.2px;transform:scaleX(0.9669);color:#111111">Видео</span>
<span class="t" style="left:66.00px;top:432.13px;font-size:15.2px;transform:scaleX(1.0016);color:#111111">Документы</span>
<span class="t" style="left:66.00px;top:462.13px;font-size:15.2px;transform:scaleX(0.9977);color:#111111">Загрузки</span>
<span class="t" style="left:64.97px;top:492.13px;font-size:15.2px;transform:scaleX(1.0348);color:#111111">Изображения</span>
<span class="t" style="left:18.30px;top:527.13px;font-size:15.2px;transform:scaleX(0.9521);color:#203864">Элементов: 2</span>
<div class="abs" id="bl"></div>
<div class="abs" id="br"></div>
<div class="abs" id="bb"></div>
</div>
</body>
</html>
